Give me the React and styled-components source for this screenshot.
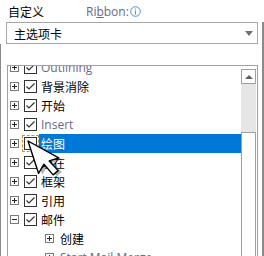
import React from 'react';
import styled, { createGlobalStyle } from 'styled-components';

const GlobalStyle = createGlobalStyle`
  html, body {
    margin: 0;
    padding: 0;
    background: #fff;
  }
  body {
    font-family: "Noto Sans", "Noto Sans CJK SC", sans-serif;
    font-size: 12px;
    color: #000;
  }
`;

const Page = styled.div`
  position: relative;
  width: 264px;
  height: 256px;
  overflow: hidden;
  background: #fff;
`;

const Header = styled.div`
  display: flex;
  align-items: center;
  height: 22px;
  padding-left: 8px;
`;

const Title = styled.span`
  font-family: "Noto Sans CJK SC", sans-serif;
  font-size: 12px;
  width: 78px;
`;

const RibbonLabel = styled.span`
  display: flex;
  align-items: center;
  gap: 1px;
  color: #6a6788;
  font-family: "Open Sans", "Noto Sans", sans-serif;
  font-size: 12px;
  u {
    text-decoration: underline;
  }
`;

const DropRow = styled.div`
  box-sizing: border-box;
  width: 264px;
  padding-left: 6px;
  border-right: 2px solid #8a8a8a;
`;

const Dropdown = styled.div`
  display: flex;
  align-items: center;
  justify-content: space-between;
  box-sizing: border-box;
  width: 252px;
  height: 22px;
  border: 1px solid #a6a6a6;
  padding: 0 4px 0 7px;
  font-family: "Noto Sans CJK SC", sans-serif;
`;

const Arrow = styled.span`
  width: 0;
  height: 0;
  border-left: 4px solid transparent;
  border-right: 4px solid transparent;
  border-top: 5px solid #707070;
`;

const Panel = styled.div`
  box-sizing: border-box;
  height: 212px;
  border-left: 1px solid #8a8a8a;
  border-right: 2px solid #8a8a8a;
  padding: 21px 0 0 6px;
`;

const ListBox = styled.div`
  box-sizing: border-box;
  display: flex;
  width: 251px;
  height: 200px;
  border: 1px solid #a0a0a0;
  border-bottom: none;
  overflow: hidden;
`;

const Rows = styled.div`
  flex: 1;
  margin-top: -8px;
`;

const Row = styled.div`
  display: flex;
  align-items: center;
  height: 19px;
  padding-left: ${(p) => (p.$child ? 37 : 2)}px;
`;

const Expander = styled.span`
  position: relative;
  box-sizing: border-box;
  flex: none;
  width: 9px;
  height: 9px;
  border: 1px solid #7a7a7a;
  margin-right: ${(p) => (p.$child ? 4 : 5)}px;
  &::before {
    content: '';
    position: absolute;
    left: 1px;
    top: 3px;
    width: 5px;
    height: 1px;
    background: #222;
  }
  &::after {
    content: '';
    display: ${(p) => (p.$open ? 'none' : 'block')};
    position: absolute;
    left: 3px;
    top: 1px;
    width: 1px;
    height: 5px;
    background: #222;
  }
`;

const Check = styled.span`
  display: flex;
  box-sizing: border-box;
  flex: none;
  width: 13px;
  height: 13px;
  border: 1px solid #333;
  background: #fff;
  margin-right: 2px;
  outline: ${(p) => (p.$focus ? '1px dashed #e8871e' : 'none')};
  outline-offset: 1px;
`;

const Label = styled.span`
  flex: ${(p) => (p.$selected ? 1 : 'none')};
  display: flex;
  align-items: center;
  height: 19px;
  padding-left: 2px;
  background: ${(p) => (p.$selected ? '#0078d7' : 'transparent')};
  color: ${(p) => (p.$selected ? '#fff' : p.$latin ? '#6a6788' : '#000')};
  font-family: ${(p) =>
    p.$latin ? '"Open Sans", "Noto Sans", sans-serif' : '"Noto Sans CJK SC", sans-serif'};
  font-size: 12px;
  white-space: nowrap;
`;

const ScrollBar = styled.div`
  display: flex;
  flex-direction: column;
  flex: none;
  width: 15px;
  padding-top: 3px;
  margin-right: 1px;
`;

const ScrollButton = styled.div`
  box-sizing: border-box;
  display: flex;
  align-items: center;
  justify-content: center;
  height: 15px;
  border: 1px solid #a0a0a0;
  background: #fff;
  &::after {
    content: '';
    border-left: 4px solid transparent;
    border-right: 4px solid transparent;
    border-bottom: 4px solid #606060;
  }
`;

const Track = styled.div`
  height: 48px;
  background: #e6e6e6;
`;

const Thumb = styled.div`
  flex: 1;
  box-sizing: border-box;
  border: 1px solid #a0a0a0;
  border-bottom: none;
  background: #fff;
`;

const Cursor = styled.svg`
  position: absolute;
  left: 20px;
  top: 136px;
  overflow: visible;
`;

const items = [
  { label: 'Outlining', latin: true, checked: true },
  { label: '背景消除', checked: true },
  { label: '开始', checked: true },
  { label: 'Insert', latin: true, checked: true },
  { label: '绘图', checked: false, selected: true },
  { label: '现在', checked: true },
  { label: '框架', checked: true },
  { label: '引用', checked: true },
  { label: '邮件', checked: true, open: true },
  { label: '创建', child: true },
  { label: 'Start Mail Merge', latin: true, child: true },
];

function CheckMark() {
  return (
    <svg width="11" height="11" viewBox="0 0 11 11">
      <polyline points="1.5,5.5 4,8 9.5,2.5" fill="none" stroke="#333" strokeWidth="1.2" />
    </svg>
  );
}

function InfoIcon() {
  return (
    <svg width="11" height="11" viewBox="0 0 11 11">
      <circle cx="5.5" cy="5.5" r="4.8" fill="none" stroke="#4f8fd8" strokeWidth="1" />
      <rect x="5" y="2.5" width="1" height="1" fill="#4f8fd8" />
      <rect x="5" y="4.5" width="1" height="4" fill="#4f8fd8" />
    </svg>
  );
}

function Pointer() {
  const pts = '0,0 0,34 8,27 13.5,40 19.5,37.5 14,25.5 24,25.5';
  return (
    <Cursor width="44" height="50" viewBox="0 0 44 50">
      <g transform="translate(8 5) rotate(-18)">
        <polygon points={pts} transform="translate(3 2.5)" fill="rgba(0,0,0,0.3)" />
        <polygon points={pts} fill="#fff" stroke="#000" strokeWidth="1.4" strokeLinejoin="round" />
      </g>
    </Cursor>
  );
}

export default function App() {
  return (
    <Page>
      <GlobalStyle />
      <Header>
        <Title>自定义</Title>
        <RibbonLabel>
          <span>
            Ri<u>b</u>bon:
          </span>
          <InfoIcon />
        </RibbonLabel>
      </Header>
      <DropRow>
        <Dropdown>
          <span>主选项卡</span>
          <Arrow />
        </Dropdown>
      </DropRow>
      <Panel>
        <ListBox>
          <Rows>
            {items.map((it) => (
              <Row key={it.label} $child={it.child}>
                <Expander $open={it.open} $child={it.child} />
                {!it.child && <Check $focus={it.selected}>{it.checked && <CheckMark />}</Check>}
                <Label $selected={it.selected} $latin={it.latin}>
                  {it.label}
                </Label>
              </Row>
            ))}
          </Rows>
          <ScrollBar>
            <ScrollButton />
            <Track />
            <Thumb />
          </ScrollBar>
        </ListBox>
      </Panel>
      <Pointer />
    </Page>
  );
}
